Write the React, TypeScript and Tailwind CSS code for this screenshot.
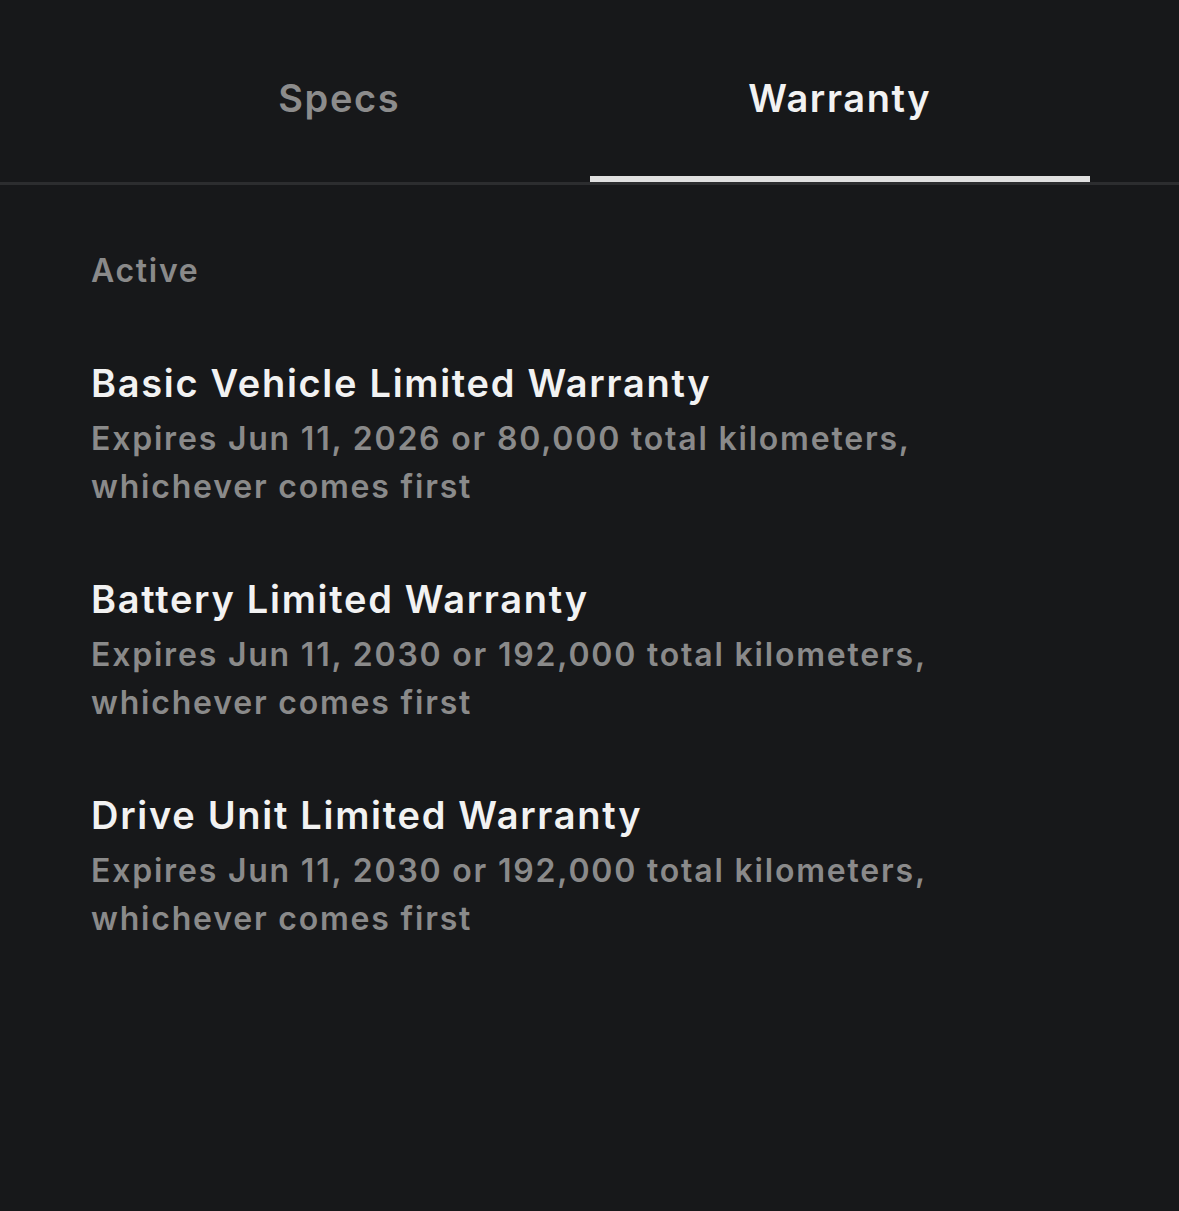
import React from "react";

const items = [
  {
    title: "Basic Vehicle Limited Warranty",
    l1: "Expires Jun 11, 2026 or 80,000 total kilometers,",
    l2: "whichever comes first",
  },
  {
    title: "Battery Limited Warranty",
    l1: "Expires Jun 11, 2030 or 192,000 total kilometers,",
    l2: "whichever comes first",
  },
  {
    title: "Drive Unit Limited Warranty",
    l1: "Expires Jun 11, 2030 or 192,000 total kilometers,",
    l2: "whichever comes first",
  },
];

export default function App() {
  return (
    <div
      className="w-[1179px] h-[1211px] bg-[#17181a] overflow-hidden"
      style={{ fontFamily: "Inter, 'Noto Sans', sans-serif" }}
    >
      <div className="flex h-[182px] px-[89px]">
        <div className="flex-1 flex items-center justify-center pt-[14px]">
          <span className="text-[38px] leading-[48px] font-semibold text-[#8c8c8c] tracking-[1.6px]">
            Specs
          </span>
        </div>
        <div className="flex-1 flex flex-col">
          <div className="flex-1 flex items-center justify-center pt-[20px]">
            <span className="text-[38px] leading-[48px] font-semibold text-[#f2f2f2] tracking-[1.6px]">
              Warranty
            </span>
          </div>
          <div className="h-[6px] bg-[#e0e0e0]" />
        </div>
      </div>
      <div className="h-[3px] bg-[#2c2d2f]" />
      <div className="px-[91px] pt-[62px] flex flex-col">
        <div className="text-[32px] leading-[48px] font-semibold text-[#8a8a8a] tracking-[1.7px]">
          Active
        </div>
        <div className="flex flex-col gap-[64px] mt-[64px]">
          {items.map((it) => (
            <div key={it.title} className="flex flex-col">
              <div className="text-[38px] leading-[48px] font-semibold text-[#f2f2f2] tracking-[1.7px]">
                {it.title}
              </div>
              <div className="mt-[8px] text-[32px] leading-[48px] font-semibold text-[#8a8a8a] tracking-[1.8px]">
                <div>{it.l1}</div>
                <div>{it.l2}</div>
              </div>
            </div>
          ))}
        </div>
      </div>
    </div>
  );
}
